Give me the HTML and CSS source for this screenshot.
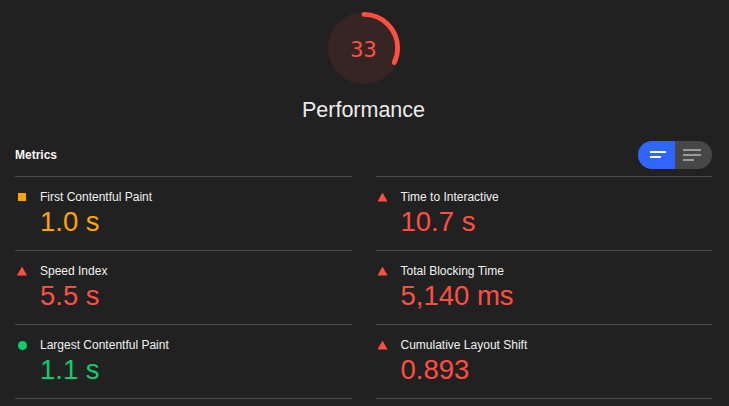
FILE: index.html
```html
<!DOCTYPE html>
<html lang="en">
<head>
<meta charset="utf-8">
<title>Lighthouse Performance</title>
<link rel="stylesheet" href="styles.css">
</head>
<body>
<div class="report">
  <div class="score">
    <div class="gauge">
      <svg class="gauge-svg" viewBox="0 0 120 120" width="72" height="72">
        <circle class="gauge-base" cx="60" cy="60" r="60"/>
        <circle class="gauge-arc" cx="60" cy="60" r="56" stroke-dasharray="113 352" transform="rotate(-90 60 60)"/>
      </svg>
      <div class="gauge-value">33</div>
    </div>
    <div class="score-title">Performance</div>
  </div>

  <div class="metrics-head">
    <div class="metrics-label">Metrics</div>
    <div class="toggle">
      <div class="toggle-half toggle-on">
        <svg width="37" height="28" viewBox="0 0 37 28">
          <rect x="12" y="10" width="16" height="2" fill="#ffffff"/>
          <rect x="12" y="15" width="11" height="2" fill="#ffffff"/>
        </svg>
      </div>
      <div class="toggle-half toggle-off">
        <svg width="37" height="28" viewBox="0 0 37 28">
          <rect x="8" y="8" width="18" height="2" fill="#9a9a9a"/>
          <rect x="8" y="13" width="18" height="2" fill="#9a9a9a"/>
          <rect x="8" y="18" width="11" height="2" fill="#9a9a9a"/>
        </svg>
      </div>
    </div>
  </div>

  <div class="metrics-grid">
    <div class="metric">
      <div class="metric-head"><span class="icon icon-average"></span><span class="metric-title">First Contentful Paint</span></div>
      <div class="metric-value average">1.0 s</div>
    </div>
    <div class="metric">
      <div class="metric-head"><span class="icon icon-fail"></span><span class="metric-title">Time to Interactive</span></div>
      <div class="metric-value fail">10.7 s</div>
    </div>
    <div class="metric">
      <div class="metric-head"><span class="icon icon-fail"></span><span class="metric-title">Speed Index</span></div>
      <div class="metric-value fail">5.5 s</div>
    </div>
    <div class="metric">
      <div class="metric-head"><span class="icon icon-fail"></span><span class="metric-title">Total Blocking Time</span></div>
      <div class="metric-value fail">5,140 ms</div>
    </div>
    <div class="metric">
      <div class="metric-head"><span class="icon icon-pass"></span><span class="metric-title">Largest Contentful Paint</span></div>
      <div class="metric-value pass">1.1 s</div>
    </div>
    <div class="metric">
      <div class="metric-head"><span class="icon icon-fail"></span><span class="metric-title">Cumulative Layout Shift</span></div>
      <div class="metric-value fail">0.893</div>
    </div>
  </div>
</div>
</body>
</html>
```

FILE: styles.css
```css
html, body {
  margin: 0;
  padding: 0;
  background: #212121;
}

body {
  font-family: "Liberation Sans", Arial, sans-serif;
  color: #f1f1f1;
  overflow: hidden;
}

.report {
  padding: 0 17px 0 15px;
}

.score {
  display: flex;
  flex-direction: column;
  align-items: center;
  padding-top: 12px;
}

.gauge {
  display: grid;
  width: 72px;
  height: 72px;
}

.gauge-svg,
.gauge-value {
  grid-area: 1 / 1;
}

.gauge-base {
  fill: rgba(255, 78, 66, 0.1);
}

.gauge-arc {
  fill: none;
  stroke: #ff4e42;
  stroke-width: 8;
  stroke-linecap: round;
}

.gauge-value {
  display: flex;
  align-items: center;
  justify-content: center;
  font-family: "DejaVu Sans Mono", "Liberation Mono", monospace;
  font-size: 22px;
  color: #ff4e42;
  padding-top: 2px;
}

.score-title {
  margin-top: 13px;
  font-size: 21.5px;
  line-height: 26px;
  color: #ececec;
}

.metrics-head {
  display: flex;
  align-items: center;
  justify-content: space-between;
  margin-top: 18px;
  margin-bottom: 7px;
  height: 28px;
}

.metrics-label {
  font-size: 12px;
  font-weight: bold;
  color: #f5f5f5;
}

.toggle {
  display: flex;
  width: 74px;
  height: 28px;
  border-radius: 14px;
  overflow: hidden;
}

.toggle-half {
  width: 37px;
  height: 28px;
}

.toggle-half svg {
  display: block;
}

.toggle-on {
  background: #3166fe;
}

.toggle-off {
  background: #474747;
}

.metrics-grid {
  display: grid;
  grid-template-columns: 1fr 1fr;
  column-gap: 24px;
}

.metric {
  border-top: 1px solid #4a4a4a;
  padding: 12px 0 12px 0;
}

.metric:nth-last-child(-n+2) {
  border-bottom: 1px solid #4a4a4a;
}

.metric-head {
  display: flex;
  align-items: center;
  height: 16px;
}

.icon {
  flex: none;
  width: 10px;
  height: 9px;
  margin-left: 2px;
  margin-right: 13px;
  display: flex;
  align-items: center;
  justify-content: center;
}

.icon-average::before {
  content: "";
  width: 8px;
  height: 8px;
  background: #ffa400;
}

.icon-fail {
  background: #ff4e42;
  clip-path: polygon(50% 0, 100% 100%, 0 100%);
}

.icon-pass::before {
  content: "";
  width: 9px;
  height: 9px;
  border-radius: 50%;
  background: #0cce6b;
}

.metric-title {
  font-size: 12px;
  line-height: 16px;
  color: #f1f1f1;
}

.metric-value {
  margin-top: 1px;
  padding-left: 25px;
  font-size: 27.5px;
  line-height: 32px;
}

.average {
  color: #ffa400;
}

.fail {
  color: #ff4e42;
}

.pass {
  color: #0cce6b;
}
```
